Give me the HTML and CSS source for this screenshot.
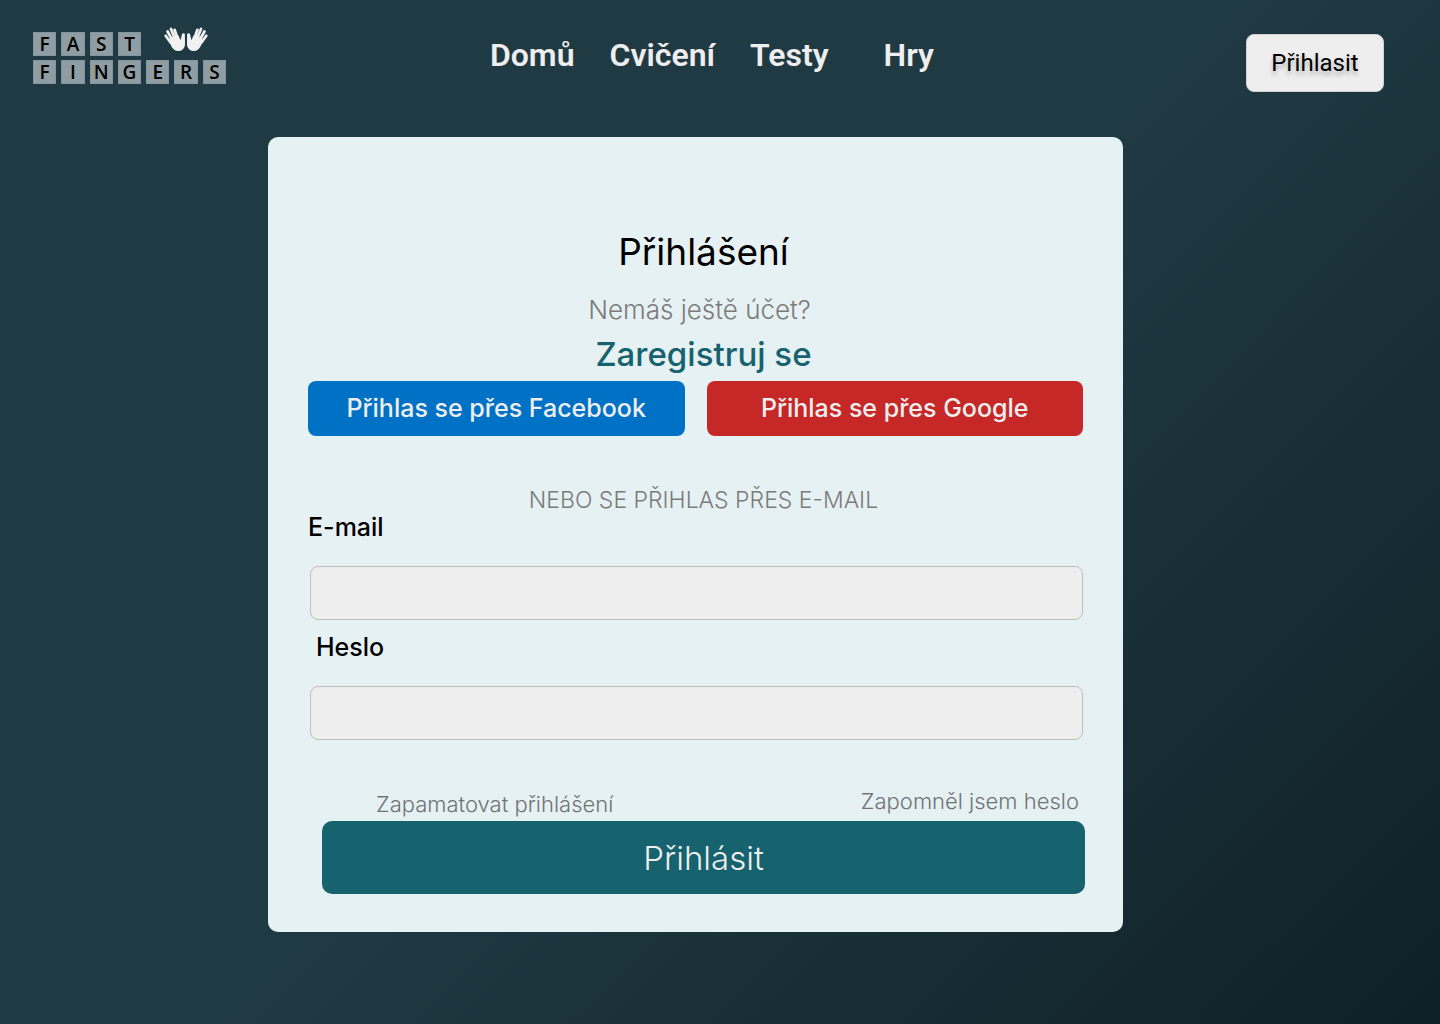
FILE: index.html
```html
<!DOCTYPE html>
<html lang="cs">
<head>
<meta charset="utf-8">
<meta name="viewport" content="width=device-width, initial-scale=1">
<title>Přihlášení</title>
<link rel="stylesheet" href="styles.css">
</head>
<body>
<header class="header">
  <a class="logo" href="#">
    <span class="tile">F</span><span class="tile">A</span><span class="tile">S</span><span class="tile">T</span>
    <svg class="hands" viewBox="0 0 44 24" aria-hidden="true">
      <defs>
        <g id="hand" fill="#f2f2f2" stroke="#f2f2f2" stroke-linecap="round">
          <path stroke="none" d="M4.500 13 L7 10.500 L9.500 9.500 L12 8.500 L14.500 8.500 L16.500 13.300 C17.200 11.500 17.300 9 18.200 6.800 C19 5.700 20.800 6 20.900 7.500 L21 17 C21 20.500 19 23.500 15 23.900 C11.500 24.200 9 22.500 7.500 19.500 Z"/>
          <path fill="none" stroke-width="2.700" d="M6.500 15.500 L1.700 8.800 M8.500 13.500 L3.600 4.500 M11 12 L7 2 M13.300 10.500 L10.600 2.800"/>
        </g>
      </defs>
      <use href="#hand"/>
      <use href="#hand" transform="translate(44 0) scale(-1 1)"/>
    </svg>
    <span class="tile row-start">F</span><span class="tile">I</span><span class="tile">N</span><span class="tile">G</span><span class="tile">E</span><span class="tile">R</span><span class="tile">S</span>
  </a>
  <nav class="nav">
    <a href="#">Domů</a>
    <a href="#">Cvičení</a>
    <a href="#">Testy</a>
    <a class="nav-last" href="#">Hry</a>
  </nav>
  <button class="login-button" type="button">Přihlasit</button>
</header>
<main class="main">
  <form class="card">
    <div class="intro">
      <h1>Přihlášení</h1>
      <p class="question">Nemáš ještě účet?</p>
      <a class="register" href="#">Zaregistruj se</a>
    </div>
    <div class="social">
      <button class="facebook" type="button">Přihlas se přes Facebook</button>
      <button class="google" type="button">Přihlas se přes Google</button>
    </div>
    <p class="divider">NEBO SE PŘIHLAS PŘES E-MAIL</p>
    <label class="field-label" for="email">E-mail</label>
    <input class="field" id="email" type="email">
    <label class="field-label password-label" for="password">Heslo</label>
    <input class="field" id="password" type="password">
    <div class="options">
      <label class="remember"><input type="checkbox">Zapamatovat přihlášení</label>
      <a class="forgot" href="#">Zapomněl jsem heslo</a>
    </div>
    <button class="submit" type="submit">Přihlásit</button>
  </form>
</main>
</body>
</html>
```
FILE: styles.css
```css
* {
  box-sizing: border-box;
}

body {
  margin: 0;
  min-height: 100vh;
  background: linear-gradient(135deg, #203a43 0%, #203a43 50%, #0f2027 100%);
  font-family: Inter, sans-serif;
  color: #000;
}

h1,
p {
  margin: 0;
}

a {
  text-decoration: none;
}

button {
  border: 0;
  padding: 0;
  font-family: inherit;
  cursor: pointer;
}

/* Header */
.header {
  display: grid;
  grid-template-columns: 193px 263fr auto 311fr 138px;
  align-items: start;
  padding: 32px 56px 45px 33px;
}

.logo {
  display: grid;
  grid-template-columns: repeat(7, 1fr);
  grid-auto-rows: 24px;
  gap: 4px 5px;
}

.tile {
  border: 1px solid #8195a0;
  background: #909da2;
  color: #000;
  font: 600 19px/22px "Open Sans", sans-serif;
  text-align: center;
}

.row-start {
  grid-column: 1;
}

.hands {
  grid-column: 5 / 8;
  align-self: end;
  justify-self: center;
  width: 44px;
  height: 24px;
  margin-bottom: 5px;
}

.nav {
  grid-column: 3;
  display: flex;
  gap: 35px;
  padding-top: 3px;
}

.nav a {
  color: #eee;
  font: 600 32px/40px Roboto, sans-serif;
}

.nav .nav-last {
  margin-left: 20px;
}

.login-button {
  grid-column: 5;
  height: 58px;
  margin-top: 2px;
  border: 1px solid #d0d0d0;
  border-radius: 8px;
  background: #eee;
  color: #000;
  font: 400 24px/28px Roboto, sans-serif;
  text-shadow: 0 4px 4px rgba(0, 0, 0, 0.25);
}

/* Login card */
.main {
  display: grid;
  grid-template-columns: 268fr 855fr 317fr;
  padding-bottom: 92px;
}

.card {
  grid-column: 2;
  display: flex;
  flex-direction: column;
  padding: 88px 40px 38px;
  border-radius: 10px;
  background: #e6f1f4;
}

.intro {
  display: flex;
  flex-direction: column;
  align-items: center;
  padding-left: 16px;
}

h1 {
  font-size: 37px;
  font-weight: 400;
  line-height: 54px;
}

.question {
  margin-top: 13px;
  padding-right: 8px;
  color: #7b7b7b;
  font-size: 26px;
  font-weight: 300;
  line-height: 36px;
}

.register {
  margin-top: 2px;
  color: #16626e;
  font-size: 33px;
  font-weight: 500;
  line-height: 48px;
}

.social {
  display: grid;
  grid-template-columns: 1fr 1fr;
  gap: 22px;
  margin-top: 3px;
}

.social button {
  height: 55px;
  padding-bottom: 2px;
  border-radius: 8px;
  color: #eee;
  font-size: 25px;
  font-weight: 500;
}

.facebook {
  background: #0072c6;
}

.google {
  background: #c62828;
}

.divider {
  margin-top: 50px;
  padding-left: 16px;
  color: #7b7b7b;
  font-size: 23px;
  font-weight: 300;
  line-height: 28px;
  text-align: center;
}

.field-label {
  font-size: 25px;
  font-weight: 500;
  line-height: 26px;
}

.password-label {
  margin-top: 14px;
  padding-left: 8px;
}

.field {
  height: 54px;
  margin: 26px 0 0 2px;
  padding: 0 16px;
  border: 1px solid #bdbdbd;
  border-radius: 8px;
  background: #eee;
  font: inherit;
  font-size: 24px;
}

.options {
  display: flex;
  justify-content: space-between;
  height: 27px;
  margin-top: 49px;
  padding: 0 4px 0 68px;
  color: #6f7375;
  font-size: 22px;
  font-weight: 300;
  line-height: 24px;
}

.remember {
  align-self: end;
}

.remember input {
  appearance: none;
  width: 0;
  height: 0;
  margin: 0;
}

.forgot {
  color: inherit;
}

.submit {
  height: 73px;
  margin: 5px -2px 0 14px;
  border-radius: 10px;
  background: #16626e;
  color: #eee;
  font-size: 33px;
  font-weight: 300;
}
```
